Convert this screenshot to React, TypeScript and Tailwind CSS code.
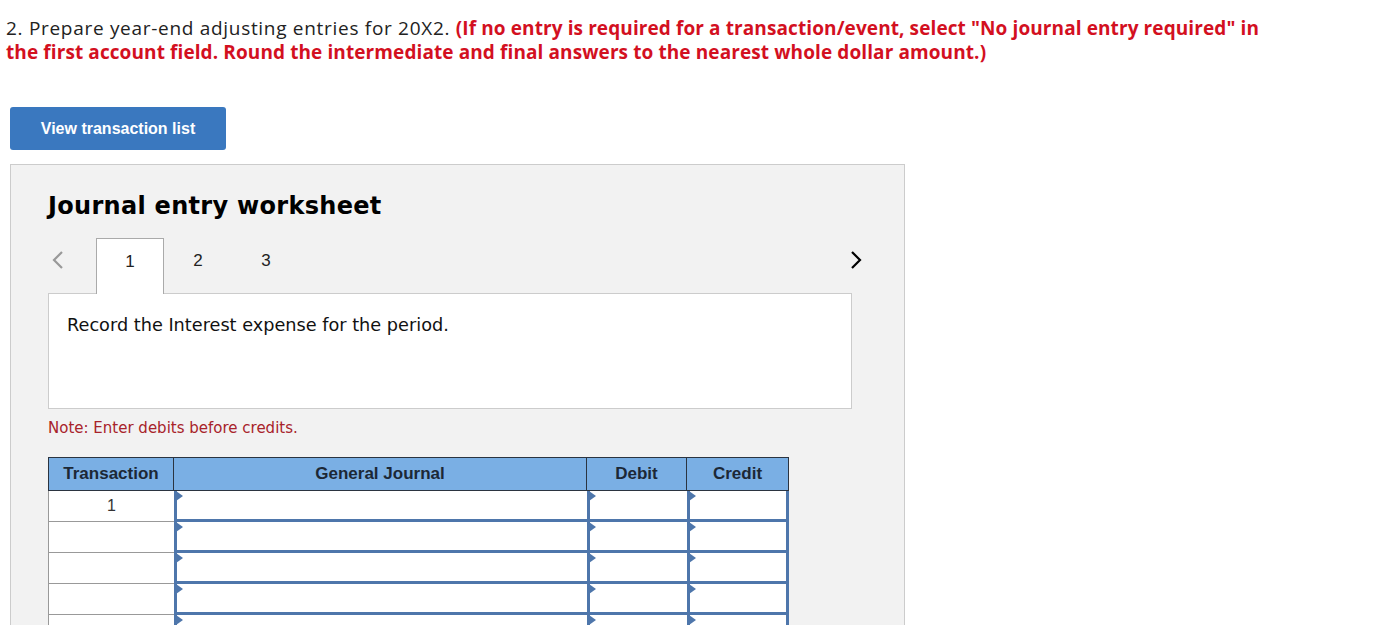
function Chevron({ dir, className }: { dir: "left" | "right"; className?: string }) {
  return (
    <svg width="14" height="20" viewBox="0 0 14 20" className={className} fill="none">
      {dir === "left" ? (
        <path d="M11 2 L3 10 L11 18" stroke="currentColor" strokeWidth="2.2" />
      ) : (
        <path d="M3 2 L11 10 L3 18" stroke="currentColor" strokeWidth="2.2" />
      )}
    </svg>
  );
}

function InputCell({ w, last }: { w: string; last?: boolean }) {
  return (
    <div
      className={`relative ${w} h-full bg-white border-l-[3px] border-b-[3px] border-[#4e76ab] ${
        last ? "border-r-[3px]" : ""
      }`}
    >
      {/* little triangle marker */}
      <div className="absolute -left-[1px] top-0 w-0 h-0 border-y-[5px] border-y-transparent border-l-[7px] border-l-[#4e76ab]" />
    </div>
  );
}

export default function App() {
  const rows = [1, 2, 3, 4, 5, 6];
  return (
    <div className="bg-white min-h-screen pt-[16px]">
      <p
        className="w-[1268px] px-[6px] text-[19px] leading-[24px] tracking-[0.7px] text-[#222]"
        style={{ fontFamily: "'Open Sans', Lato, sans-serif" }}
      >
        2. Prepare year-end adjusting entries for 20X2.{" "}
        <span className="font-bold tracking-[0.1px] text-[#d3101f]">
          (If no entry is required for a transaction/event, select "No journal entry required" in the first account
          field. Round the intermediate and final answers to the nearest whole dollar amount.)
        </span>
      </p>

      <button
        className="ml-[10px] mt-[43px] w-[216px] h-[43px] rounded-[3px] bg-[#3a78bf] text-white text-[16px] font-bold"
        style={{ fontFamily: "'Liberation Sans', Arial, sans-serif" }}
      >
        View transaction list
      </button>

      <div className="ml-[10px] mt-[14px] w-[895px] border border-[#cccccc] bg-[#f2f2f2] pl-[37px] pt-[26px] pb-10">
        <h2
          className="text-[24px] leading-[30px] tracking-[0.3px] font-bold text-black"
          style={{ fontFamily: "'DejaVu Sans', Verdana, sans-serif" }}
        >
          Journal entry worksheet
        </h2>

        {/* tabs */}
        <div
          className="mt-[17px] flex items-start w-[803px] relative z-10 -mb-px"
          style={{ fontFamily: "'Liberation Sans', Arial, sans-serif" }}
        >
          <div className="w-[48px] h-[44px] flex items-center pl-[3px] text-[#999]">
            <Chevron dir="left" />
          </div>
          <div className="w-[68px] h-[56px] bg-white border border-b-0 border-[#aaaaaa] flex justify-center pt-[10px] text-[17px] text-[#222]">
            1
          </div>
          <div className="w-[68px] flex justify-center pt-[10px] text-[17px] text-[#222]">2</div>
          <div className="w-[68px] flex justify-center pt-[10px] text-[17px] text-[#222]">3</div>
          <div className="ml-auto -mr-[12px] h-[44px] flex items-center text-black">
            <Chevron dir="right" />
          </div>
        </div>

        <div
          className="w-[804px] h-[116px] bg-white border border-[#cccccc] pl-[18px] pt-[18px] text-[17.7px] text-[#111]"
          style={{ fontFamily: "'DejaVu Sans', Verdana, sans-serif" }}
        >
          Record the Interest expense for the period.
        </div>

        <p
          className="mt-[9px] text-[15px] leading-[20px] text-[#a8232a]"
          style={{ fontFamily: "'DejaVu Sans', Verdana, sans-serif" }}
        >
          Note: Enter debits before credits.
        </p>

        {/* journal table */}
        <div className="mt-[19px] w-[741px]" style={{ fontFamily: "'Liberation Sans', Arial, sans-serif" }}>
          <div className="flex h-[34px] bg-[#7aafe4] border border-[#2b3440] text-[17px] font-bold text-[#1c2836]">
            <div className="w-[125px] flex items-center justify-center border-r border-[#2b3440]">Transaction</div>
            <div className="w-[413px] flex items-center justify-center border-r border-[#2b3440]">General Journal</div>
            <div className="w-[100px] flex items-center justify-center border-r border-[#2b3440]">Debit</div>
            <div className="flex-1 flex items-center justify-center">Credit</div>
          </div>
          {rows.map((r) => (
            <div key={r} className="flex h-[31px]">
              <div className="w-[126px] h-full bg-white border-l border-b border-[#999999] flex justify-center pt-[3px] text-[16px] text-[#333]">
                {r === 1 ? "1" : ""}
              </div>
              <InputCell w="w-[413px]" />
              <InputCell w="w-[100px]" />
              <InputCell w="flex-1" last />
            </div>
          ))}
        </div>
      </div>
    </div>
  );
}
